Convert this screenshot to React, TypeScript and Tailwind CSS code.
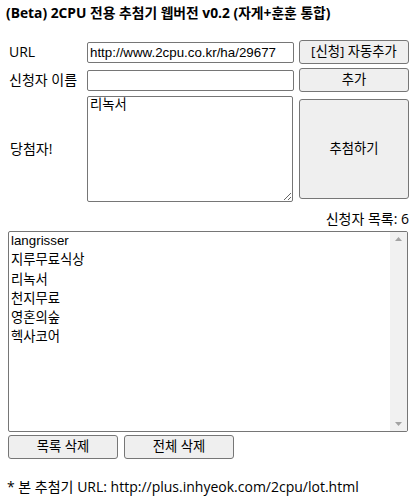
import { useState } from 'react'

const applicants = ['langrisser', '지루무료식상', '리녹서', '천지무료', '영혼의숲', '헥사코어']

const ui = "font-['Open_Sans','Noto_Sans_CJK_KR',sans-serif]"
const field = "font-['Liberation_Sans','Noto_Sans_CJK_KR',sans-serif] text-[13.33px]"
const btn =
  'bg-[#efefef] border border-[#767676] rounded-[3px] text-[13.33px] text-black leading-none ' +
  "font-['Open_Sans','Noto_Sans_CJK_KR',sans-serif] hover:bg-[#e5e5e5]"

export default function App() {
  const [url, setUrl] = useState('http://www.2cpu.co.kr/ha/29677')
  const [name, setName] = useState('')

  return (
    <div className={`${ui} p-2 text-black bg-white w-[417px] h-[501px]`}>
      <h3 className="text-[13.8px] font-bold leading-[18px] -mx-[2px] -mt-[4px] whitespace-nowrap">
        (Beta) 2CPU 전용 추첨기 웹버전 v0.2 (자게+훈훈 통합)
      </h3>

      <div className="mt-[18px] flex flex-col gap-[4px]">
        <div className="flex items-center h-[24px]">
          <label className="w-[79px] pl-[1px] text-[14px] leading-none">URL</label>
          <input
            value={url}
            onChange={e => setUrl(e.target.value)}
            className={`${field} w-[207px] h-[21px] border border-[#767676] rounded-[2px] px-[2px] outline-none`}
          />
          <button className={`${btn} ml-[5px] w-[110px] h-[24px]`}>[신청] 자동추가</button>
        </div>

        <div className="flex items-center h-[24px]">
          <label className="w-[79px] pl-[1px] text-[14px] leading-none whitespace-nowrap">신청자 이름</label>
          <input
            value={name}
            onChange={e => setName(e.target.value)}
            className={`${field} w-[207px] h-[21px] border border-[#767676] rounded-[2px] px-[2px] outline-none`}
          />
          <button className={`${btn} ml-[5px] w-[110px] h-[24px]`}>추가</button>
        </div>

        <div className="flex items-center h-[106px]">
          <label className="w-[79px] pl-[2px] text-[14px] leading-none">당첨자!</label>
          <textarea
            readOnly
            value="리녹서"
            className="w-[206px] h-[106px] border border-[#767676] rounded-[2px] pl-[2px] pt-0 text-[13.33px] leading-[14px] outline-none font-['Noto_Sans_CJK_KR',sans-serif]"
          />
          <button className={`${btn} ml-[6px] w-[110px] h-[100px]`}>추첨하기</button>
        </div>
      </div>

      <div className="w-[401px] text-right text-[14px] leading-[18px] mt-[8px]">신청자 목록: {applicants.length}</div>

      <div className="mt-[3px] w-[400px] h-[201px] border border-[#767676] rounded-[2px] flex overflow-hidden">
        <ul className={`${field} flex-1 pl-[2px]`}>
          {applicants.map(a => (
            <li key={a} className="h-[19.3px] leading-[17px] font-['Liberation_Sans','Noto_Sans_CJK_KR',sans-serif]">
              {a}
            </li>
          ))}
        </ul>
        <div className="w-[17px] bg-[#f1f1f1] flex flex-col justify-between items-center py-[5px]">
          <svg width="7" height="4" viewBox="0 0 7 4">
            <path d="M0 4 L3.5 0 L7 4 Z" fill="#a3a3a3" />
          </svg>
          <svg width="7" height="4" viewBox="0 0 7 4">
            <path d="M0 0 L3.5 4 L7 0 Z" fill="#a3a3a3" />
          </svg>
        </div>
      </div>

      <div className="mt-[3px] flex gap-[6px]">
        <button className={`${btn} w-[110px] h-[24px]`}>목록 삭제</button>
        <button className={`${btn} w-[110px] h-[24px]`}>전체 삭제</button>
      </div>

      <p className="mt-[19px] text-[14px] leading-[18px] -ml-[1px]">* 본 추첨기 URL: http://plus.inhyeok.com/2cpu/lot.html</p>
    </div>
  )
}
